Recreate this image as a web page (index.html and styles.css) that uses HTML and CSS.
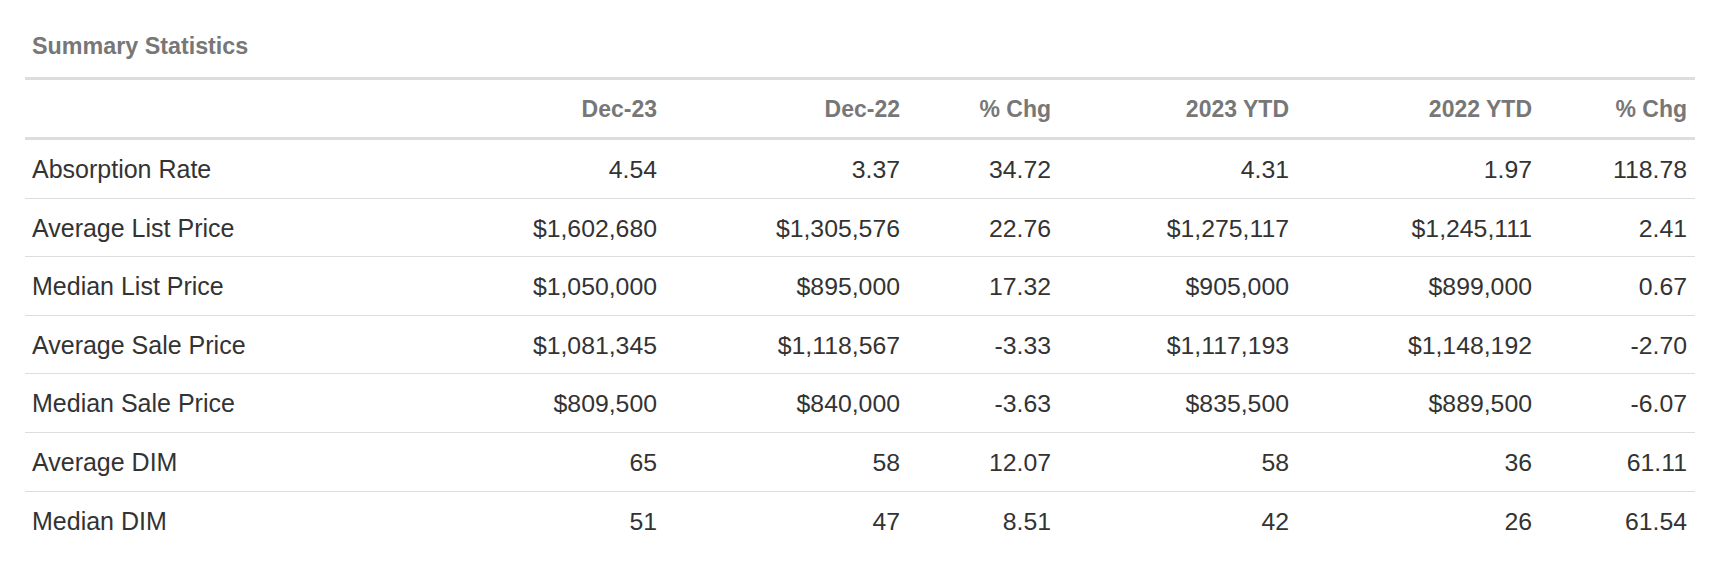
FILE: index.html
```html
<!DOCTYPE html>
<html lang="en">
<head>
<meta charset="utf-8">
<title>Summary Statistics</title>
<link rel="stylesheet" href="styles.css">
</head>
<body>
<section class="panel">
  <h2 class="title">Summary Statistics</h2>
  <table class="stats">
    <colgroup>
      <col class="c-label">
      <col class="c-a">
      <col class="c-b">
      <col class="c-c">
      <col class="c-d">
      <col class="c-e">
      <col class="c-f">
    </colgroup>
    <thead>
      <tr>
        <th></th>
        <th>Dec-23</th>
        <th>Dec-22</th>
        <th>% Chg</th>
        <th>2023 YTD</th>
        <th>2022 YTD</th>
        <th>% Chg</th>
      </tr>
    </thead>
    <tbody>
      <tr><td>Absorption Rate</td><td>4.54</td><td>3.37</td><td>34.72</td><td>4.31</td><td>1.97</td><td>118.78</td></tr>
      <tr><td>Average List Price</td><td>$1,602,680</td><td>$1,305,576</td><td>22.76</td><td>$1,275,117</td><td>$1,245,111</td><td>2.41</td></tr>
      <tr><td>Median List Price</td><td>$1,050,000</td><td>$895,000</td><td>17.32</td><td>$905,000</td><td>$899,000</td><td>0.67</td></tr>
      <tr><td>Average Sale Price</td><td>$1,081,345</td><td>$1,118,567</td><td>-3.33</td><td>$1,117,193</td><td>$1,148,192</td><td>-2.70</td></tr>
      <tr><td>Median Sale Price</td><td>$809,500</td><td>$840,000</td><td>-3.63</td><td>$835,500</td><td>$889,500</td><td>-6.07</td></tr>
      <tr><td>Average DIM</td><td>65</td><td>58</td><td>12.07</td><td>58</td><td>36</td><td>61.11</td></tr>
      <tr><td>Median DIM</td><td>51</td><td>47</td><td>8.51</td><td>42</td><td>26</td><td>61.54</td></tr>
    </tbody>
  </table>
</section>
</body>
</html>
```

FILE: styles.css
```css
html, body {
  margin: 0;
  padding: 0;
  background: #ffffff;
}

body {
  font-family: "Liberation Sans", Arial, Helvetica, sans-serif;
  color: #333333;
}

.panel {
  padding: 0 21px 0 25px;
}

.title {
  margin: 0 0 18px;
  padding: 33px 7px 0;
  font-size: 23.3px;
  line-height: 26px;
  font-weight: 700;
  color: #777777;
}

.stats {
  width: 100%;
  table-layout: fixed;
  border-collapse: collapse;
  border-top: 3px solid #dddddd;
}

.c-label { width: 397px; }
.c-a { width: 243px; }
.c-b { width: 243px; }
.c-c { width: 151px; }
.c-d { width: 238px; }
.c-e { width: 243px; }
.c-f { width: 155px; }

.stats th {
  padding: 15.5px 8px;
  font-size: 23px;
  line-height: 26px;
  font-weight: 700;
  color: #777777;
  text-align: right;
  border-bottom: 3px solid #dddddd;
  white-space: nowrap;
}

.stats td {
  padding: 17.1px 8px 15.5px;
  font-size: 24.8px;
  line-height: 25px;
  color: #333333;
  text-align: right;
  border-bottom: 1px solid #dddddd;
  white-space: nowrap;
}

.stats td:first-child {
  padding-left: 7px;
  font-size: 25px;
  text-align: left;
}

.stats tbody tr:last-child td {
  border-bottom: none;
}
```
